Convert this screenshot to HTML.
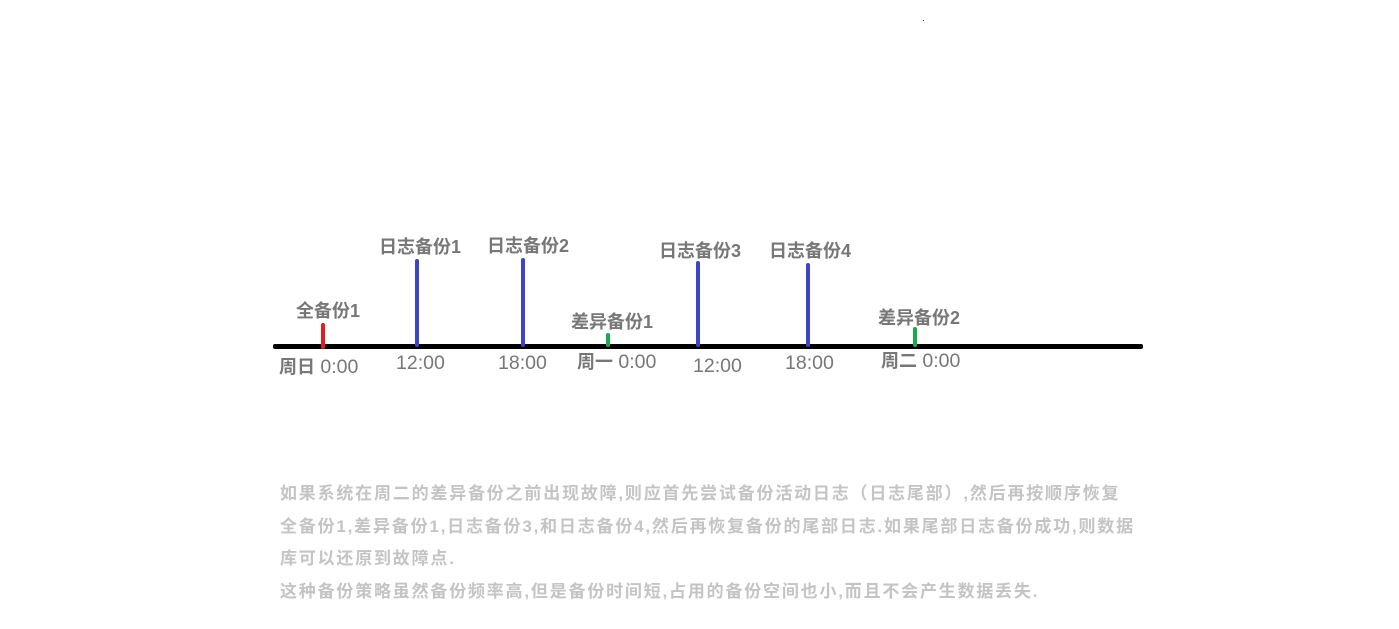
<!DOCTYPE html>
<html><head><meta charset="utf-8"><style>
body{margin:0;width:1399px;height:629px;background:#fff;position:relative;overflow:hidden;font-family:"Liberation Sans","Noto Sans CJK SC",sans-serif}
.l{position:absolute;font-size:18px;line-height:22px;color:#777;font-weight:bold;white-space:nowrap}
.t{position:absolute;font-size:19.5px;line-height:22px;color:#777;white-space:nowrap}
.t b{font-size:18px}
.v{position:absolute;width:4px;border-radius:2px}
.p{position:absolute;left:280px;top:478px;font-size:17px;line-height:32.5px;color:#c4c4c4;font-weight:bold;width:900px;letter-spacing:1.8px}
</style></head><body>
<div style="position:absolute;left:923px;top:20px;width:1px;height:1px;background:#333"></div>
<div style="position:absolute;left:273px;top:344px;width:870px;height:5px;background:#000;border-radius:2px"></div>
<div class="v" style="left:321px;top:323px;height:26px;background:#e01c24"></div>
<div class="v" style="left:415px;top:259px;height:88px;background:#3e44c6"></div>
<div class="v" style="left:521px;top:258px;height:89px;background:#3e44c6"></div>
<div class="v" style="left:696px;top:261px;height:86px;background:#3e44c6"></div>
<div class="v" style="left:806px;top:263px;height:84px;background:#3e44c6"></div>
<div class="v" style="left:606px;top:333px;height:14px;background:#1fa84a"></div>
<div class="v" style="left:913px;top:327px;height:20px;background:#1fa84a"></div>
<div class="l" style="left:296px;top:300px">全备份1</div>
<div class="l" style="left:379px;top:236px">日志备份1</div>
<div class="l" style="left:487px;top:235px">日志备份2</div>
<div class="l" style="left:571px;top:311px">差异备份1</div>
<div class="l" style="left:659px;top:240px">日志备份3</div>
<div class="l" style="left:769px;top:240px">日志备份4</div>
<div class="l" style="left:878px;top:307px">差异备份2</div>
<div class="t" style="left:279px;top:356px"><b>周日</b> 0:00</div>
<div class="t" style="left:396px;top:352px">12:00</div>
<div class="t" style="left:498px;top:352px">18:00</div>
<div class="t" style="left:577px;top:351px"><b>周一</b> 0:00</div>
<div class="t" style="left:693px;top:355px">12:00</div>
<div class="t" style="left:785px;top:352px">18:00</div>
<div class="t" style="left:881px;top:350px"><b>周二</b> 0:00</div>
<div class="p">如果系统在周二的差异备份之前出现故障,则应首先尝试备份活动日志（日志尾部）,然后再按顺序恢复<br>全备份1,差异备份1,日志备份3,和日志备份4,然后再恢复备份的尾部日志.如果尾部日志备份成功,则数据<br>库可以还原到故障点.<br>这种备份策略虽然备份频率高,但是备份时间短,占用的备份空间也小,而且不会产生数据丢失.</div>
</body></html>
